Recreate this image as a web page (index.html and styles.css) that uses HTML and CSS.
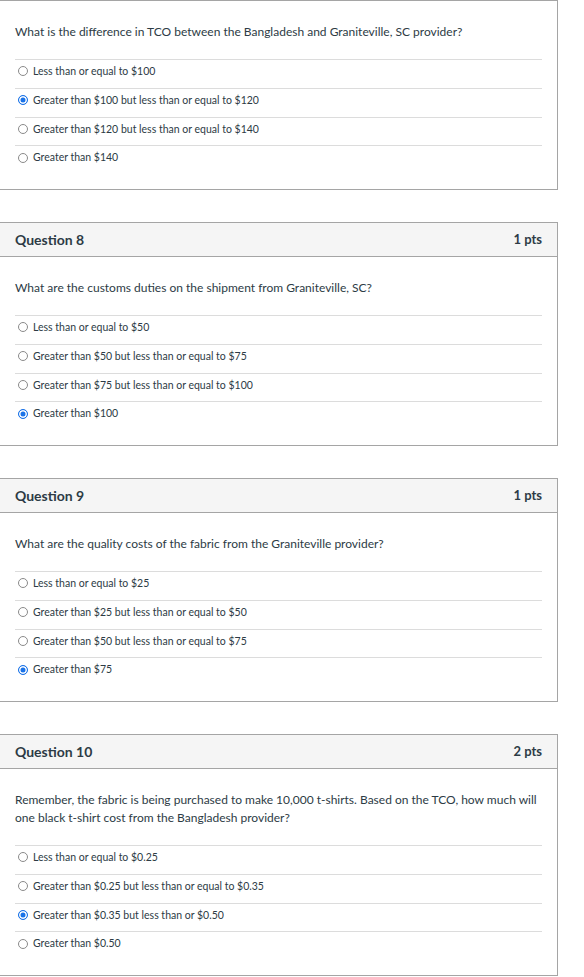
FILE: index.html
```html
<!DOCTYPE html>
<html>
<head>
<meta charset="utf-8">
<link rel="stylesheet" href="styles.css">
</head>
<body>
<div class="quiz">
  <section class="card">
    <div class="body">
      <p class="qtext">What is the difference in TCO between the Bangladesh and Graniteville, SC provider?</p>
      <ul class="answers">
        <li><span class="radio"></span>Less than or equal to $100</li>
        <li><span class="radio on"></span>Greater than $100 but less than or equal to $120</li>
        <li><span class="radio"></span>Greater than $120 but less than or equal to $140</li>
        <li><span class="radio"></span>Greater than $140</li>
      </ul>
    </div>
  </section>

  <section class="card">
    <header class="head"><span class="title">Question 8</span><span class="pts">1 pts</span></header>
    <div class="body">
      <p class="qtext">What are the customs duties on the shipment from Graniteville, SC?</p>
      <ul class="answers">
        <li><span class="radio"></span>Less than or equal to $50</li>
        <li><span class="radio"></span>Greater than $50 but less than or equal to $75</li>
        <li><span class="radio"></span>Greater than $75 but less than or equal to $100</li>
        <li><span class="radio on"></span>Greater than $100</li>
      </ul>
    </div>
  </section>

  <section class="card">
    <header class="head"><span class="title">Question 9</span><span class="pts">1 pts</span></header>
    <div class="body">
      <p class="qtext">What are the quality costs of the fabric from the Graniteville provider?</p>
      <ul class="answers">
        <li><span class="radio"></span>Less than or equal to $25</li>
        <li><span class="radio"></span>Greater than $25 but less than or equal to $50</li>
        <li><span class="radio"></span>Greater than $50 but less than or equal to $75</li>
        <li><span class="radio on"></span>Greater than $75</li>
      </ul>
    </div>
  </section>

  <section class="card">
    <header class="head"><span class="title">Question 10</span><span class="pts">2 pts</span></header>
    <div class="body">
      <p class="qtext">Remember, the fabric is being purchased to make 10,000 t-shirts. Based on the TCO, how much will one black t-shirt cost from the Bangladesh provider?</p>
      <ul class="answers">
        <li><span class="radio"></span>Less than or equal to $0.25</li>
        <li><span class="radio"></span>Greater than $0.25 but less than or equal to $0.35</li>
        <li><span class="radio on"></span>Greater than $0.35 but less than or $0.50</li>
        <li><span class="radio"></span>Greater than $0.50</li>
      </ul>
    </div>
  </section>
</div>
</body>
</html>
```

FILE: styles.css
```css
html, body {
  margin: 0;
  padding: 0;
  background: #fff;
}
body {
  font-family: Lato, "Liberation Sans", sans-serif;
  color: #2d3b45;
}
.quiz {
  display: flex;
  flex-direction: column;
  gap: 32px;
  width: 559px;
  margin-left: -1px;
}
.card {
  border: 1px solid #a5a5a5;
  background: #fff;
}
.head {
  display: flex;
  justify-content: space-between;
  align-items: center;
  height: 32px;
  padding: 0 15px 1px;
  background: #f5f5f5;
  border-bottom: 1px solid #a5a5a5;
  font-size: 14px;
}
.title {
  font-weight: 700;
}
.pts {
  font-weight: 700;
  font-size: 13px;
}
.body {
  padding: 0 15px 15px 15px;
}
.qtext {
  margin: 0;
  padding: 22px 0 18px;
  font-size: 12px;
  line-height: 18px;
}
.answers {
  list-style: none;
  margin: 0;
  padding: 0;
}
.answers li {
  display: flex;
  align-items: center;
  gap: 5px;
  border-top: 1px solid #dcdcdc;
  padding: 3px 0 8px 3px;
  line-height: 16.75px;
  font-size: 10.5px;
  color: #2d3b45;
}
.radio {
  width: 8px;
  height: 8px;
  border-radius: 50%;
  border: 1px solid #8a8a8a;
  background: #fff;
  flex: none;
}
.radio.on {
  border-color: #1a73e8;
  background: #1a73e8;
  box-shadow: inset 0 0 0 1.5px #fff;
}
```
